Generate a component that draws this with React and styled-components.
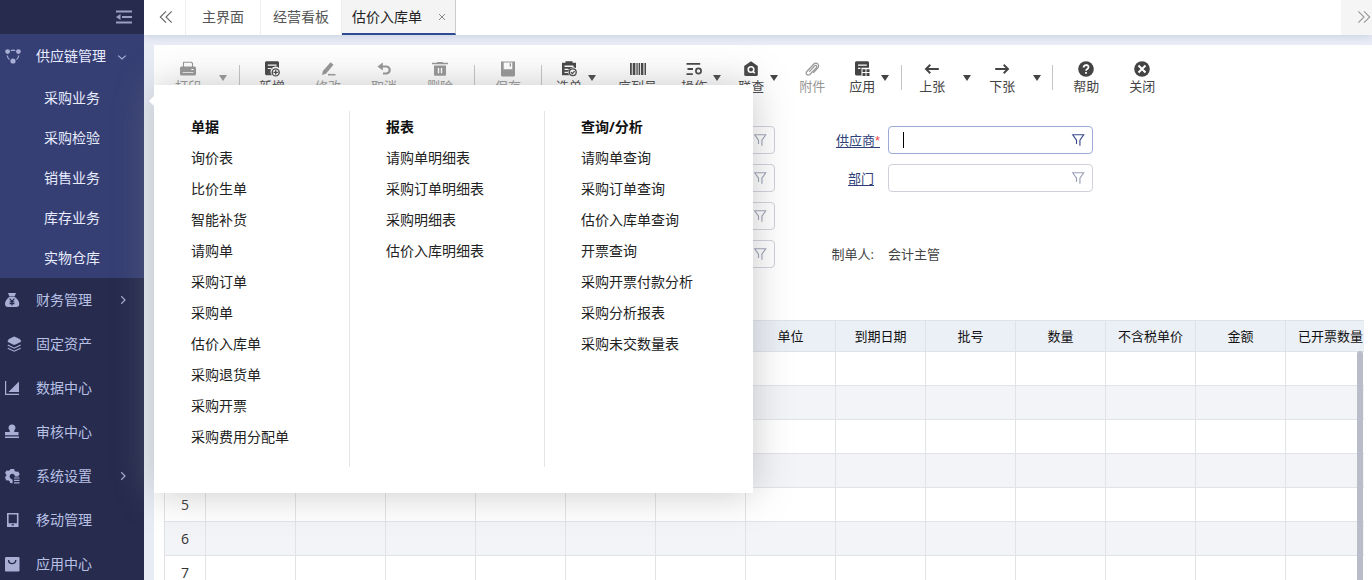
import React from 'react';
import styled, { createGlobalStyle } from 'styled-components';

const GlobalStyle = createGlobalStyle`
  * { box-sizing: border-box; }
  body {
    margin: 0;
    background: #e8ecf5;
    color: #333;
    font: 14px/20px 'Open Sans', 'Noto Sans CJK SC', sans-serif;
  }
  button, input { font: inherit; color: inherit; }
  button { padding: 0; border: none; background: none; cursor: pointer; }
  ul { margin: 0; padding: 0; list-style: none; }
  a { color: inherit; text-decoration: none; }
  svg { display: block; flex: none; }
`;

const Shell = styled.div`
  display: flex;
  height: 100vh;
  overflow: hidden;
`;

/* sidebar */
const Sidebar = styled.nav`
  position: relative;
  z-index: 2;
  flex: none;
  width: 144px;
  background: #272c4f;
  color: #b8c0e4;
`;

const SidebarTop = styled.div`
  display: flex;
  justify-content: flex-end;
  align-items: center;
  height: 34px;
  padding-right: 12px;
  color: #9aa0c4;
`;

const NavGroup = styled.li`
  background: ${(p) => (p.$open ? '#363f73' : 'transparent')};
  color: ${(p) => (p.$open ? '#e8ecff' : 'inherit')};
`;

const NavLink = styled.a`
  display: flex;
  align-items: center;
  height: 44px;
  padding: 0 16px 0 5px;

  > svg:first-child { color: #a8aed4; }
  > svg:last-child { color: #a8b0d8; }
`;

const NavText = styled.span`
  flex: 1;
  margin-left: 15px;
  white-space: nowrap;
`;

const SubItem = styled.li`
  position: relative;
`;

const SubLink = styled.a`
  display: block;
  line-height: 40px;
  text-align: center;
`;

/* fly-out menu */
const Flyout = styled.div`
  position: absolute;
  top: 7px;
  left: 154px;
  display: flex;
  padding: 26px 13px 26px 1px;
  background: #fff;
  color: #222;
  box-shadow: 0 0 36px rgba(135, 135, 135, 0.46);

  &::before {
    content: '';
    position: absolute;
    top: 11px;
    left: -5px;
    border: solid transparent;
    border-width: 5px 5px 5px 0;
    border-right-color: #fff;
  }
`;

const FlyoutColumn = styled.section`
  width: 195px;
  padding: 0 0 15px 36px;
  border-right: 1px solid #e4e4e4;
  line-height: 31px;
  white-space: nowrap;

  &:last-child { border-right-color: transparent; }
`;

const FlyoutTitle = styled.h3`
  margin: 0;
  font-size: 14px;
  font-weight: 700;
  color: #111;
`;

/* tabs */
const Content = styled.div`
  display: flex;
  flex: 1;
  flex-direction: column;
  min-width: 0;
`;

const TabBar = styled.div`
  position: relative;
  display: flex;
  flex: none;
  height: 35px;
  background: #fff;
  color: #555;
  box-shadow: 0 1px 8px rgba(70, 85, 160, 0.2);
`;

const TabArrow = styled.button`
  display: flex;
  align-items: center;
  justify-content: center;
  width: ${(p) => (p.$end ? 31 : 42)}px;
  margin-left: ${(p) => (p.$end ? 'auto' : 0)};
  padding: 0 0 2px ${(p) => (p.$end ? 14 : 2)}px;
  border-right: ${(p) => (p.$end ? 'none' : '1px solid #eee')};
  background: ${(p) => (p.$end ? '#f5f5f5' : 'transparent')};
  color: ${(p) => (p.$end ? '#999' : '#666')};
`;

const Tab = styled.div`
  display: flex;
  align-items: center;
  gap: 16px;
  padding: 0 ${(p) => (p.$wide ? '16px' : '12px')} 2px;
  border-right: 1px solid #eee;

  ${(p) => p.$active && `
    padding: 0 9px 0 10px;
    border-right-color: #ccc;
    border-bottom: 2px solid #2f4b94;
    background: #f4f4f4;
    color: #222;
  `}
`;

const CloseTab = styled.button`
  color: #888;
`;

/* page panel */
const Panel = styled.main`
  flex: 1;
  min-height: 0;
  margin: 10px 0 0 10px;
  overflow: hidden;
  background: #fff;
`;

const Toolbar = styled.div`
  display: flex;
  height: 65px;
  padding-top: 16px;
`;

const Tool = styled.button`
  display: flex;
  flex-direction: column;
  align-items: center;
  flex: none;
  align-self: flex-start;
  margin-left: ${(p) => p.$space}px;
  color: ${(p) => (p.disabled ? '#969696' : '#444')};
  font-size: 13px;
  line-height: 18px;
`;

const Caret = styled.button`
  flex: none;
  align-self: flex-start;
  width: 8px;
  margin: 14px 0 0 ${(p) => p.$space}px;
  border: solid transparent;
  border-width: 6px 4px 0;
  border-top-color: ${(p) => (p.disabled ? '#969696' : '#444')};
`;

const Divider = styled.span`
  flex: none;
  width: 1px;
  height: 25px;
  margin: 4px 0 0 ${(p) => p.$space}px;
  background: #c4c4c4;
`;

const Form = styled.form`
  display: grid;
  grid-template-columns: 621px 318px;
  grid-auto-rows: 28px;
  row-gap: 10px;
  margin-top: 16px;
  font-size: 13px;
`;

const Field = styled.div`
  display: flex;
  align-items: center;
  justify-content: flex-end;
  grid-column: ${(p) => p.$column};
  grid-row: ${(p) => p.$row};
`;

const Label = styled.label`
  margin-right: ${(p) => (p.$required ? 8 : 14)}px;
  color: #2f3f78;
  text-decoration: underline;
  text-underline-offset: 2px;
`;

const Star = styled.span`
  color: #f04848;
  font-family: 'Liberation Sans', sans-serif;
`;

const Box = styled.div`
  display: flex;
  align-items: center;
  width: 205px;
  height: 28px;
  padding: 0 7px 0 14px;
  border: 1px solid ${(p) => (p.$focused ? '#9da9d6' : '#cfd1da')};
  border-radius: 4px;
  color: ${(p) => (p.$focused ? '#3a4a8c' : '#9a9fb5')};
`;

const TextInput = styled.input`
  flex: 1;
  min-width: 0;
  padding: 0;
  border: none;
  outline: none;
  background: none;
  color: #333;
  caret-color: transparent;
`;

const Cursor = styled.span`
  width: 1px;
  height: 16px;
  background: #000;
`;

const StaticText = styled.span`
  width: ${(p) => (p.$value ? '205px' : 'auto')};
  margin-right: ${(p) => (p.$value ? 0 : 14)}px;
  color: #444;
`;

/* grid */
const GridWrap = styled.div`
  position: relative;
  margin: 52px 8px 0 10px;
  overflow: hidden;
`;

const Table = styled.table`
  width: 1212px;
  table-layout: fixed;
  border-spacing: 0;
  border-top: 1px solid #dde3ec;
  border-left: 1px solid #dfe1e6;
  font-size: 13px;
  color: #111;

  th, td {
    height: 34px;
    padding: 0;
    border-right: 1px solid #e1e3e6;
    border-bottom: 1px solid #e1e3e6;
    font-weight: 400;
    text-align: center;
    white-space: nowrap;
  }
  thead th { height: 31px; padding-bottom: 1px; background: #ebeff6; border-color: #dde3ec; }
  tbody th { font-size: 14px; color: #333; }
  tbody tr:nth-child(even) { background: #f3f4f8; }
`;

const Column = styled.col`
  width: ${(p) => (p.$index ? 41 : 90)}px;
`;

const ScrollThumb = styled.span`
  position: absolute;
  top: 31px;
  right: 1px;
  bottom: 0;
  width: 6px;
  border-radius: 3px;
  background: #b9bdc9;
`;

const Icon = ({ size = 16, children }) => (
  <svg width={size} height={size} viewBox="0 0 16 16" fill="currentColor" aria-hidden="true">
    {children}
  </svg>
);

const line = { fill: 'none', stroke: 'currentColor', strokeWidth: 1.5 };

const icons = {
  chain: (
    <>
      <circle cx="2.6" cy="3.6" r="2.4" /><circle cx="13.4" cy="3.6" r="2.4" /><circle cx="8" cy="13" r="2.6" />
      <path {...line} strokeWidth="1.2" d="M5.8 2.6Q8 1.6 10.2 2.6M2.2 7.5Q2.6 10 4.5 11.5M13.8 7.5Q13.4 10 11.5 11.5" />
    </>
  ),
  money: (
    <>
      <path d="M3 1h8L9.600 4.400H4.400zM4.200 5h5.600C12.500 6.500 14.300 9.500 14.300 12c0 2-1.200 3-3 3H3c-1.800 0-3-1-3-3 0-2.500 1.700-5.500 4.200-7z" />
      <path fill="none" stroke="#272c4f" strokeWidth="1.200" d="M4.600 6.600 7 9.400l2.400-2.800M7 9.400v4M4.600 9.800h4.800M4.600 11.600h4.800" />
    </>
  ),
  layers: (
    <>
      <path d="m9.200.6 5 2.200Q17 4.800 15.600 6L10 8.800H8.400L3 6Q1.800 4.800 4.400 2.800z" />
      <path {...line} strokeWidth="1.200" d="m2.800 9 6.400 3.200L15.600 9M2.800 12.200l6.400 3 6.400-3" />
    </>
  ),
  chart: <><path {...line} strokeWidth="1.200" d="M.6 1v13.400H14" /><path d="M14 1.500V12H3.500z" /></>,
  stamp: <path d="M7 .6a3.200 3.200 0 0 1 2.400 5.600L9.200 8H13.500v3.200H0V8h4.800l-.2-1.800A3.200 3.200 0 0 1 7 .6zM0 12.500h14v1.500H0z" />,
  gear: (
    <>
      <path d="m5.500 1 3.600.1.6 1.900 1.500.8 2-.4 1.600 2.800-1.400 1.600.2.800H10A2.700 2.700 0 1 0 6.300 11l1.300.8v3.400l-2.300-.2-.8-1.900-1.500-.8-1.800.3L0 9.300l1.300-1.500V6.400L0 5l1.500-2.600 2.200.4 1.300-.7z" />
      <path {...line} d="M9 10h5.500M9 12.400h5.500M9 14.800h5.500" strokeWidth="1.200" />
    </>
  ),
  tablet: <path fillRule="evenodd" d="M2 1h11.500v14H2zm1.600 1.600v8.600h8.300V2.600zM6.600 12.200v1.300h2.300v-1.300z" />,
  bag: <><rect y="1" width="14.500" height="14.500" rx="1.200" /><path fill="none" stroke="#272c4f" strokeWidth="1.400" d="M3.600 4c0 4.800 7.200 4.800 7.200 0" /></>,
  print: <><path {...line} strokeWidth="1.100" d="M3.500 6V1.300h8l1 1V6" /><path fillRule="evenodd" d="M1.500 5.500h13q1.500 0 1.500 1.500v6q0 1.500-1.500 1.500h-13Q0 14.500 0 13V7q0-1.500 1.500-1.500zm9.800 2.400v1.200h2.400V7.900zM2.600 11.300v.7h10.800v-.7z" /></>,
  add: (
    <>
      <path fillRule="evenodd" d="M2 .3h12l1 1v5.700a5 5 0 0 0-7 7.200H2l-1-1V1.300zm1.800 3.200v1.200h8.800V3.500zm0 3.400v1.200h4.500V6.900z" />
      <circle {...line} cx="11.700" cy="11.400" r="3.500" strokeWidth="1.400" /><path {...line} strokeWidth="1.400" d="M11.700 9.200v4.400M9.500 11.400h4.400" />
    </>
  ),
  edit: <><path d="m10.600 1.200 2.900 2.500-7.500 9-4 1.300.9-3.900z" /><path {...line} d="M8 13.700h7.500" /></>,
  undo: <><path {...line} strokeWidth="2.200" d="M5 5.500h5.200a3.500 3.500 0 0 1 0 7H7" /><path d="M6.800 1.500v8L1.500 5.500z" /></>,
  trash: <path fillRule="evenodd" d="M5 1h6v.8h5v1.500H0V1.800h5zM2 4.500h12v9.200q0 1-1 1H3q-1 0-1-1zM5.800 7v5.200h1.400V7zm3 0v5.200h1.400V7z" />,
  save: <path fillRule="evenodd" d="M1 .5h14v14l-1 1H2l-1-1zm2.700 1v6.700h8.600V1.500zm6 .8H11v3.200H9.700z" />,
  pick: (
    <>
      <path fillRule="evenodd" d="M4.500.3h7v1.500H15v5.400a5 5 0 0 0-6.800 7H1V1.800h3.500zm-1 4.300v1.300h9V4.600zm0 3.200v1.200h4V7.800zm0 3v1.200H7v-1.200z" />
      <circle {...line} cx="11.800" cy="11.300" r="3.400" strokeWidth="1.300" /><path {...line} strokeWidth="1.300" d="m10 11.200 1.400 1.400 2.200-2.500" />
    </>
  ),
  barcode: <path d="M0 2h1.800v12H0zm2.700 0h2.700v12H2.700zm3.700 0h1.300v12H6.400zm2.200 0H10v12H8.600zm2.300 0h2.500v12h-2.500zm3.600 0H16v12h-1.500z" />,
  operate: <><path {...line} strokeWidth="1.800" d="M.5 2.800h13.700M1.500 8H7M.5 13.200h6.300" /><circle {...line} cx="12.500" cy="10" r="2.600" strokeWidth="1.700" /></>,
  lookup: <><path d="M8 .3 14.800 5v8.500q0 1.500-1.500 1.500H2.700q-1.500 0-1.500-1.500V5z" /><circle cx="8" cy="8.500" r="2.800" fill="none" stroke="#fff" strokeWidth="1.600" /><path stroke="#fff" strokeWidth="1.600" d="m9.800 10.300 2 2" /></>,
  clip: <path {...line} strokeWidth="1.200" d="m5.200 10.800 5.500-6q1.300-.9 2 .2.500.9-.3 1.700l-6.500 6.800q-1.700 1.300-3.100 0-1.300-1.500 0-3l7-7.500q2-1.700 3.900-.2 1.800 1.900.2 4l-4.600 5" />,
  apps: <path fillRule="evenodd" d="M2 .3h12l1 1v5.500H7.500v7.700H2l-1-1V1.300zm2 3.200v1.300h8.800V3.500zm0 3.300V8h2.500V6.800zm4.500 1.400h3v2.800h-3zm4 0h3v2.800h-3zm-4 3.900h3v2.800h-3zm4 0h3v2.800h-3z" />,
  prev: <path {...line} strokeWidth="1.900" d="M14.800 8H2.300M6.300 3.800 2 8l4.300 4.200" />,
  next: <path {...line} strokeWidth="1.900" d="M1.200 8h12.500M9.700 3.800 14 8l-4.300 4.200" />,
  help: <><circle cx="8" cy="8" r="7.800" /><path fill="none" stroke="#fff" strokeWidth="1.800" d="M5.600 6.500c0-3.300 4.900-3.200 4.900-.3C10.500 8 8 7.800 8 9.800M8 11v1.800" /></>,
  close: <><circle cx="8" cy="8" r="7.800" /><path stroke="#fff" strokeWidth="2" d="m4.500 4.500 7 7m0-7-7 7" /></>,
};

const FilterIcon = () => (
  <Icon size={14}><path {...line} strokeWidth="1.300" d="M6.300 12.500V8.300L2 2h12.500L10.200 8.300v6.200" /></Icon>
);

const subItems = ['采购业务', '采购检验', '销售业务', '库存业务', '实物仓库'];

const navItems = [
  { text: '财务管理', icon: 'money', arrow: true },
  { text: '固定资产', icon: 'layers' },
  { text: '数据中心', icon: 'chart' },
  { text: '审核中心', icon: 'stamp' },
  { text: '系统设置', icon: 'gear', arrow: true },
  { text: '移动管理', icon: 'tablet' },
  { text: '应用中心', icon: 'bag' },
];

const flyout = [
  { title: '单据', items: ['询价表', '比价生单', '智能补货', '请购单', '采购订单', '采购单', '估价入库单', '采购退货单', '采购开票', '采购费用分配单'] },
  { title: '报表', items: ['请购单明细表', '采购订单明细表', '采购明细表', '估价入库明细表'] },
  { title: '查询/分析', items: ['请购单查询', '采购订单查询', '估价入库单查询', '开票查询', '采购开票付款分析', '采购分析报表', '采购未交数量表'] },
];

// space: gap before the item, caret: gap before its drop-down arrow
const tools = [
  { text: '打印', icon: 'print', space: 21, caret: 18, disabled: true },
  { divider: true, space: 12 },
  { text: '新增', icon: 'add', space: 19 },
  { text: '修改', icon: 'edit', space: 30, disabled: true },
  { text: '取消', icon: 'undo', space: 30, disabled: true },
  { text: '删除', icon: 'trash', space: 30, disabled: true },
  { divider: true, space: 21 },
  { text: '保存', icon: 'save', space: 20, disabled: true },
  { divider: true, space: 20 },
  { text: '选单', icon: 'pick', space: 14, caret: 6 },
  { text: '序列号', icon: 'barcode', space: 22 },
  { text: '操作', icon: 'operate', space: 24, caret: 6 },
  { text: '联查', icon: 'lookup', space: 17, caret: 6 },
  { text: '附件', icon: 'clip', space: 21, disabled: true },
  { text: '应用', icon: 'apps', space: 24, caret: 6 },
  { divider: true, space: 12 },
  { text: '上张', icon: 'prev', space: 17, caret: 18 },
  { text: '下张', icon: 'next', space: 18, caret: 18 },
  { divider: true, space: 11 },
  { text: '帮助', icon: 'help', space: 20 },
  { text: '关闭', icon: 'close', space: 30 },
];

const headers = ['', '', '', '', '', '', '', '单位', '到期日期', '批号', '数量', '不含税单价', '金额', '已开票数量'];

const FlyoutMenu = () => (
  <Flyout>
    {flyout.map((group) => (
      <FlyoutColumn key={group.title}>
        <FlyoutTitle>{group.title}</FlyoutTitle>
        <ul>
          {group.items.map((item) => <li key={item}><a href="#">{item}</a></li>)}
        </ul>
      </FlyoutColumn>
    ))}
  </Flyout>
);

const SideNav = () => (
  <Sidebar>
    <SidebarTop>
      <button type="button" aria-label="收起">
        <Icon><path {...line} strokeWidth="1.800" d="M0 2.500h16M6 8h10M0 13.500h16" /><path d="M4.500 5v6L0 8z" /></Icon>
      </button>
    </SidebarTop>
    <ul>
      <NavGroup $open>
        <NavLink href="#">
          <Icon>{icons.chain}</Icon>
          <NavText>供应链管理</NavText>
          <Icon size={12}><path {...line} d="m3 7.500 5 4.500 5-4.500" /></Icon>
        </NavLink>
        <ul>
          {subItems.map((text, i) => (
            <SubItem key={text}>
              <SubLink href="#">{text}</SubLink>
              {i === 0 && <FlyoutMenu />}
            </SubItem>
          ))}
        </ul>
      </NavGroup>
      {navItems.map(({ text, icon, arrow }) => (
        <NavGroup key={text}>
          <NavLink href="#">
            <Icon>{icons[icon]}</Icon>
            <NavText>{text}</NavText>
            {arrow && <Icon size={12}><path {...line} d="m7 3 5 5-5 5" /></Icon>}
          </NavLink>
        </NavGroup>
      ))}
    </ul>
  </Sidebar>
);

const FilterInput = ({ focused, ...props }) => (
  <Box $focused={focused}>
    {focused && <Cursor />}
    <TextInput type="text" {...props} />
    <button type="button" aria-label="筛选"><FilterIcon /></button>
  </Box>
);

const App = () => (
  <>
    <GlobalStyle />
    <Shell>
      <SideNav />
      <Content>
        <TabBar>
          <TabArrow type="button" aria-label="向左">
            <Icon size={14}><path {...line} strokeWidth="1.300" d="M8 1.500 1.500 8 8 14.500M14.500 1.500 8 8l6.500 6.500" /></Icon>
          </TabArrow>
          <Tab $wide><a href="#">主界面</a></Tab>
          <Tab><a href="#">经营看板</a></Tab>
          <Tab $active>
            <a href="#">估价入库单</a>
            <CloseTab type="button" aria-label="关闭标签">
              <Icon size={8}><path {...line} strokeWidth="2" d="m2 2 12 12M14 2 2 14" /></Icon>
            </CloseTab>
          </Tab>
          <TabArrow type="button" aria-label="向右" $end>
            <Icon size={14}><path {...line} strokeWidth="1.300" d="M1.500 1.500 8 8l-6.500 6.500M8 1.500 14.500 8 8 14.500" /></Icon>
          </TabArrow>
        </TabBar>
        <Panel>
          <Toolbar>
            {tools.map(({ divider, text, icon, space, caret, disabled }, i) => (
              divider ? <Divider key={i} $space={space} /> : (
                <React.Fragment key={i}>
                  <Tool type="button" $space={space} disabled={disabled}>
                    <Icon>{icons[icon]}</Icon>
                    {text}
                  </Tool>
                  {caret && <Caret type="button" aria-label={text} $space={caret} disabled={disabled} />}
                </React.Fragment>
              )
            ))}
          </Toolbar>
          <Form>
            {[1, 2, 3, 4].map((row) => (
              <Field key={row} $column={1} $row={row}>
                <FilterInput aria-label={`条件${row}`} />
              </Field>
            ))}
            <Field $column={2} $row={1}>
              <Label htmlFor="supplier" $required>供应商<Star>*</Star></Label>
              <FilterInput id="supplier" focused />
            </Field>
            <Field $column={2} $row={2}>
              <Label htmlFor="department">部门</Label>
              <FilterInput id="department" />
            </Field>
            <Field $column={2} $row={4}>
              <StaticText>制单人:</StaticText>
              <StaticText $value>会计主管</StaticText>
            </Field>
          </Form>
          <GridWrap>
            <Table>
              <colgroup>
                {headers.map((_, i) => <Column key={i} $index={i === 0} />)}
              </colgroup>
              <thead>
                <tr>{headers.map((text, i) => <th key={i} scope="col">{text}</th>)}</tr>
              </thead>
              <tbody>
                {[1, 2, 3, 4, 5, 6, 7].map((n) => (
                  <tr key={n}>
                    <th scope="row">{n}</th>
                    {headers.slice(1).map((_, i) => <td key={i} />)}
                  </tr>
                ))}
              </tbody>
            </Table>
            <ScrollThumb />
          </GridWrap>
        </Panel>
      </Content>
    </Shell>
  </>
);

export default App;
